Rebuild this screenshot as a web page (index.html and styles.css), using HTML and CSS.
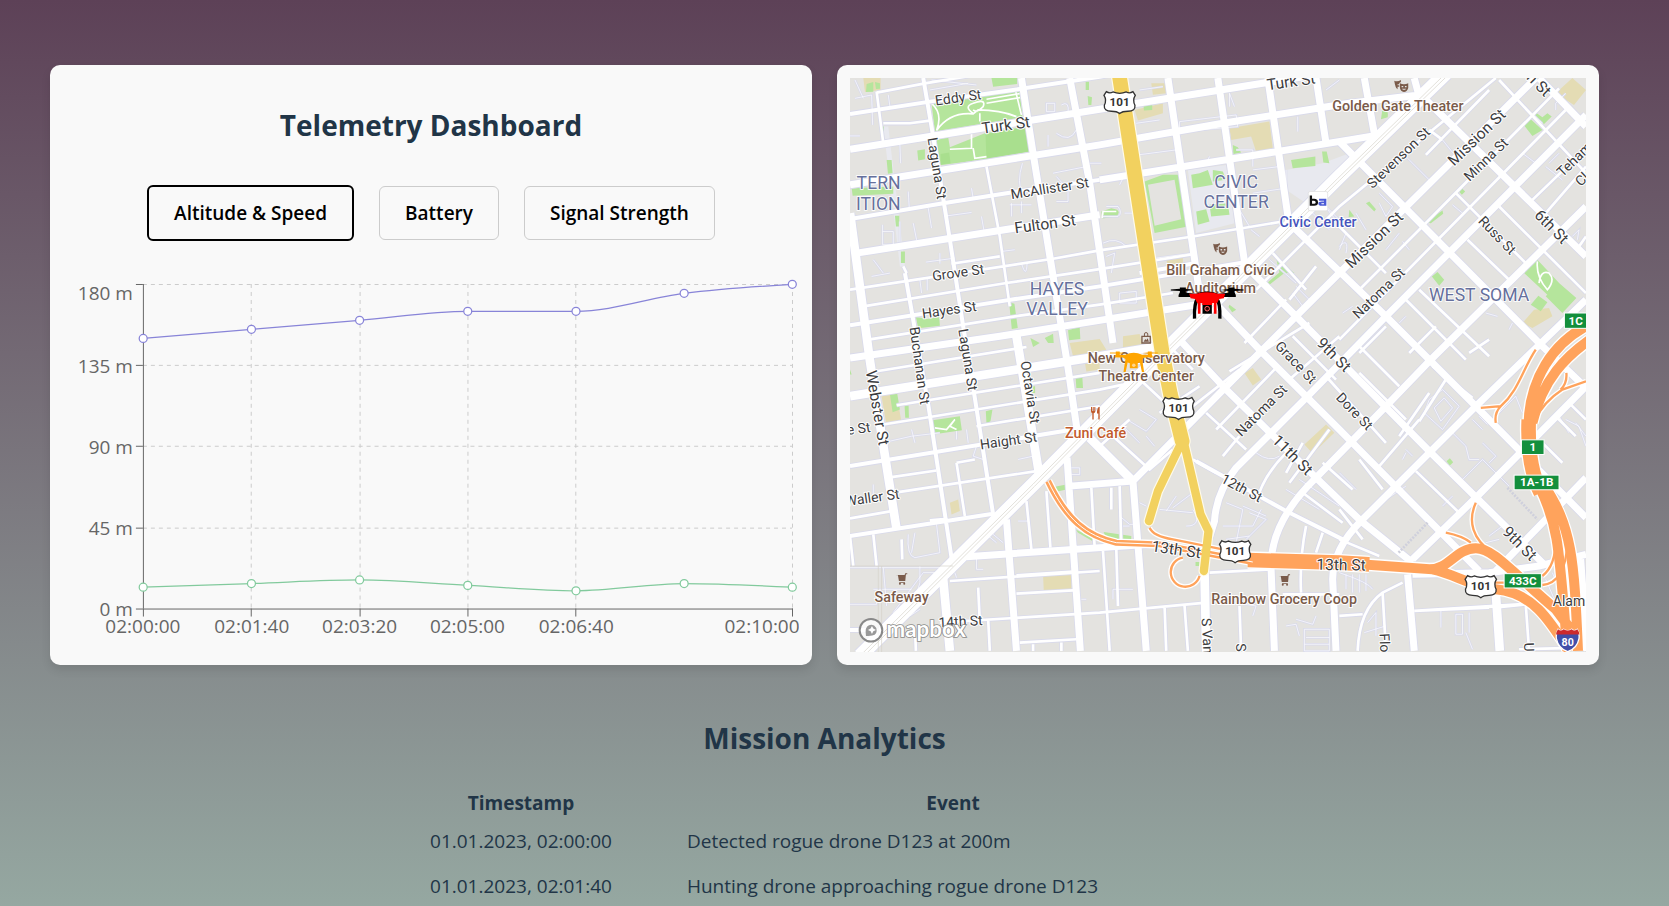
FILE: index.html
```html
<!DOCTYPE html>
<html lang="en">
<head>
<meta charset="utf-8">
<title>Telemetry Dashboard</title>
<link rel="stylesheet" href="styles.css">
</head>
<body>
<main class="page">
<div class="panels">
<section class="card">
<h2 class="title">Telemetry Dashboard</h2>
<div class="tabs">
<button class="tab active" type="button">Altitude &amp; Speed</button>
<button class="tab" type="button">Battery</button>
<button class="tab" type="button">Signal Strength</button>
</div>
<svg class="chart" viewBox="63 278 737 375" role="img" aria-label="Altitude and speed over time">
<path class="grid" d="M143 284.5H793M143 365.5H793M143 446.5H793M143 528.5H793M251.5 284V609M360.5 284V609M468.5 284V609M576.5 284V609M793.5 284V609"/>
<path class="axis" d="M143.5 284V609M143 609.5H794M136 284.5H143M136 365.5H143M136 446.5H143M136 528.5H143M136 609.5H143M143.5 609V617M251.5 609V617M360.5 609V617M468.5 609V617M576.5 609V617M793.5 609V617"/>
<g class="tick end"><text x="133" y="300">180 m</text><text x="133" y="373">135 m</text><text x="133" y="454">90 m</text><text x="133" y="535">45 m</text><text x="133" y="616">0 m</text></g>
<g class="tick mid"><text x="143" y="633">02:00:00</text><text x="252" y="633">02:01:40</text><text x="360" y="633">02:03:20</text><text x="468" y="633">02:05:00</text><text x="577" y="633">02:06:40</text><text x="763" y="633">02:10:00</text></g>
<g class="altitude"><path d="M143.3 338.5L251.7 329.4L360 320.4C396 317.4 432 311.4 468.3 311.4L576.7 311.4C612.8 311.4 648.9 297.8 685 293.3C721 288.8 757 286.5 793.3 284.3"/>
<circle cx="143.3" cy="338.5" r="4"/><circle cx="251.7" cy="329.4" r="4"/><circle cx="360" cy="320.4" r="4"/><circle cx="468.3" cy="311.4" r="4"/><circle cx="576.7" cy="311.4" r="4"/><circle cx="685" cy="293.3" r="4"/><circle cx="793.3" cy="284.3" r="4"/></g>
<g class="speed"><path d="M143.3 587.6L251.7 584C288 582.8 324 580.4 360 580.4C396 580.4 432 584 468.3 585.8C504.4 587.6 540.6 591.2 576.7 591.2C612.8 591.2 649 584 685 584C721 584 757 585.8 793.3 587.6"/>
<circle cx="143.3" cy="587.6" r="4"/><circle cx="251.7" cy="584" r="4"/><circle cx="360" cy="580.4" r="4"/><circle cx="468.3" cy="585.8" r="4"/><circle cx="576.7" cy="591.2" r="4"/><circle cx="685" cy="584" r="4"/><circle cx="793.3" cy="587.6" r="4"/></g>
</svg>
</section>
<section class="card">
<svg class="map" viewBox="30 54 2211 1725" role="img" aria-label="Drone positions on a street map">
<defs>
<g id="roads">
<g class="alley"><path d="M45 60L70 115M45 115L95 105L98 195M30 228H60M145 105L150 140M180 255L182 310M205 395L208 445M265 445L275 505M322 468L395 458M395 385L400 415M425 470L432 510M128 495V555H160V515H128M180 485V545M220 490L230 540M258 607L345 595M300 580V612M100 600L130 640M95 650L150 640M240 660L245 700M262 655V692M485 575L525 570M545 610Q560 660 562 610M510 435H575M515 430V470M545 425V460M620 130H645V155H620ZM665 135Q690 120 685 160M625 225V260M650 220Q690 250 710 210M640 340L750 318M650 350L690 395M650 425H685V390M548 310Q530 370 548 400M275 60L410 75M270 90L385 70"/>
<path d="M150 1145L215 1130L300 1120M215 1110L225 1150M205 1425Q200 1490 225 1495L300 1480L290 1395M225 1420L215 1480M380 1110L385 1150M350 1115V1140M410 1160L400 1190L430 1200M535 1200L580 1190M100 1275V1310M535 1385H565M30 1525H330M130 1525L140 1640M240 1520V1570L225 1620M160 1660L250 1540H285L170 1680M410 1490V1530H430M30 1635H110V1600M345 1540L350 1555M440 1425L470 1450M460 1425L490 1450M725 1620H740M695 1225H720V1245H695M100 1590H215M210 1670L240 1650"/>
<path d="M1170 100L1185 140M1170 100V140M1020 185L1190 165L1195 200L1020 215ZM900 90L970 80M890 190L960 180M895 285L1010 270M840 375L850 355M1240 330L1320 320M1240 400L1340 385M1375 170V215M1190 270H1240V320M800 440H835Q850 460 835 470H790M855 460H885M790 550Q830 530 860 560M800 590L825 580L815 640M1200 450L1230 500M1235 510L1260 530M840 700L890 695V730H840ZM950 595L1060 580M1290 600L1370 670M1370 680L1410 720L1390 740L1360 700M1400 440L1470 510M1430 410L1500 480M1450 430L1520 520L1500 570M1460 90L1500 60M1340 330V380M750 310H785M1110 290L1105 300"/>
<path d="M1700 290L1770 360M1810 240L1850 290M1500 560Q1530 530 1520 580M1620 400L1660 440L1640 470L1620 430M1550 460L1580 510M1840 435L1870 460M1690 545L1710 570M1640 570L1680 520M2030 115L2110 190M2050 280L2090 310M2120 320L2170 360M2130 310L2160 280M2020 790L2010 810M1940 760L1975 770M2150 150V130L2180 100M2200 530L2220 510L2215 540M1540 740L1510 760M1680 790L1700 770"/>
<path d="M850 1100L900 1150M870 1085L920 1115L950 1080L900 1050M920 1130L945 1160M900 1330L920 1340M960 1350L1060 1360M1000 1345L1060 1300M1010 1310L980 1355M1060 1350Q1090 1400 1040 1400M840 1370L870 1395H880M850 1400H870M1160 1330L1210 1350L1190 1450M1210 1340L1280 1370M1150 1400H1240L1265 1350M1160 1440L1230 1430M1230 1360L1280 1380L1220 1440M1250 1180Q1290 1210 1320 1190M1340 1290L1440 1350M1380 1260L1500 1340M1500 1240L1550 1290M820 1620V1590H880M1180 1630L1250 1640L1240 1670M1395 1710H1470V1775H1395ZM1400 1735H1470M1395 1755H1470M1370 1680L1420 1695L1430 1670M1340 1700L1370 1695L1380 1730"/>
<path d="M1770 1020L1810 990L1860 1040L1810 1110L1755 1060ZM1785 1045L1815 1015L1840 1045L1805 1085ZM1840 1120L1880 1160L1890 1200H1920M1930 1150L1970 1190L1950 1210M1870 1260L1930 1200L2010 1280M1900 1080L1930 1110M1920 1070L1945 1095M2210 1090L2241 1130M2180 1080L2220 1100L2241 1160M2160 1070L2190 1120M1600 1590Q1590 1570 1500 1540M1520 1545V1590M1540 1545V1600M1560 1545V1600M1580 1545V1595M1850 1665H1870V1725H1850ZM1890 1660V1720M1805 1655V1705M1880 1720L1900 1770M1585 1690L1610 1660V1730M1575 1720L1640 1700M2060 1630V1660M1950 1430L1990 1400M1940 1450L1980 1440M2060 1480L2110 1500M2120 1560L2150 1630M2140 1540L2180 1640M1980 1060L2030 1010L2050 1060M2010 940L2050 900M1500 1520L1600 1530M1700 1170L1720 1190M1700 1180L1690 1200M1640 1320L1700 1280M1840 1310L1810 1340"/></g>
<g class="lane"><path d="M110 98L255 70L560 20M110 95L130 250M130 190L210 190L270 182M190 620L200 640M480 590L335 612M30 690L640 597L780 572L1060 530L1330 485M70 740L500 670L780 628L1070 582M85 840L540 768L780 735L1000 700M110 935L560 862M170 1037L780 940M130 1095L780 990L850 975M410 1100L780 1040M155 1253L290 1233M175 1298L590 1235M30 1377L155 1355M330 1565L780 1535M530 1603L700 1593M530 1548L700 1537M300 1690L780 1660L1100 1630M540 1750L710 1740M440 320L480 530L510 740M560 1325L575 1470M620 1295L632 1465M755 1285L765 1465M790 1475L810 1775M830 1470L835 1640M975 1640L980 1775M1035 1640L1045 1775M1200 1640L1205 1775M445 1680L450 1775M415 1585L420 1690M580 1755V1775M665 1750V1775M225 1700L228 1775M100 1425L110 1520M30 1430L40 1520M350 1210L375 1370M350 1210L405 1200M185 1440L187 1500M840 1280L845 1460M815 1285V1350"/>
<path d="M1970 54L1500 440L1250 690M2160 85L1740 510L1560 690M2180 150L1500 840M2241 265L2080 420M2241 320L2120 460M1950 90L1760 285M2241 530L2220 560M1980 60L2241 340M1810 240L1770 210M1850 400L2060 610M1980 440L2241 700M1885 540L2020 670M1740 690L1950 890M1500 500L1640 640M1300 580L1400 690M1430 620L1350 720M1340 720L1215 850M1410 790L1170 935M1700 720L1880 900M1790 800L1710 880M1950 840L1890 880M1360 830L1490 960M1200 930L1060 1040M1310 925L1130 1110M1350 960L1500 830M1100 1060L1220 1170M1200 1130L1150 1190M1340 1180Q1270 1250 1250 1330M1500 1110L1620 1230M1560 940L1700 1080M1640 800L1560 880M1460 950L1640 1150M1740 1080L1620 1220M1730 1235L1860 1360M1680 1130L1770 1000M1560 1200L1630 1290M1450 1210L1540 1290M1390 1150L1340 1240M1470 1110L1350 1270M1390 1300L1510 1390M1400 1400Q1380 1500 1385 1600M1450 1420L1430 1480M1500 1440L1620 1490M1110 1540L1295 1530M1330 1605L1500 1605M1500 1670L1570 1665M1725 1655L1950 1645M1725 1655L2120 1630M1965 1645L2120 1630M2060 1635L2070 1775M2040 1770L2241 1765M1740 1085L1820 960M1900 1015L1780 920M1680 980L1560 860M2110 1150L2170 1210M2150 1070L2210 1130M2241 1080L2190 1030M1130 1240L1060 1200M880 940L1030 1080M960 1060L1080 980M820 1130L930 1230L1000 1170M780 1160L870 1080M1500 1350L1570 1440M1000 870L1060 930"/>
<path d="M1690 1570L1630 1600Q1560 1650 1555 1775M1630 1600L1640 1775"/></g>
<g class="street"><path d="M30 162L270 125L520 90L780 50L990 15M30 478L310 430L500 400L780 360M30 797L500 722L780 680L1230 605M30 1220L700 1110M30 1430L460 1363M195 640L265 1035L335 1495M250 54L280 230L330 540L370 800L405 1015L460 1365M1070 1205L1340 1355L1510 1440M270 1385L320 1380M30 1712H80M900 640L1070 610M1500 1110L1400 1015"/></g>
<g class="avenue"><path d="M30 268L780 148L1270 70L1700 0M30 375L780 255L1150 190L1530 130L1740 105M780 360L1170 298L1530 240L1620 225M50 580L480 512L780 465M30 895L480 830L780 782L1070 735M380 1492L930 1455M690 1280L880 1265M545 54L580 280L685 925L712 1110M682 1195L722 1775M690 54L750 370L820 850M985 54L1080 700M1135 54L1220 640M1285 54L1350 500M1430 54L1460 250M1575 54L1605 220M1725 54L1740 110M1720 1545L1950 1540L2100 1520L2241 1485M1705 1545L1725 1775M2225 1500L2245 1775"/>
<path d="M2090 54L1500 640L1250 890L880 1265M2241 165L1640 770L1400 1015L1190 1225Q1130 1300 1125 1385L1095 1480M2241 440L1770 905L1640 1040L1430 1255Q1290 1390 1295 1530L1305 1775M2241 720L1910 1040L1565 1385Q1480 1470 1480 1560L1490 1775M2241 980L1910 1315L1720 1500M2241 1255L1970 1535M1740 100L2241 590M2100 54L2241 200M1500 245L2100 850L2241 985M1350 490L1640 770L1910 1040L2241 1375M1210 610L1370 770L1775 1180L2120 1520M1080 680L1270 880L1500 1110L1920 1535M1020 840L1160 990L1430 1255L1565 1385L1720 1510M880 1265L920 1775M500 1380L530 1775"/></g>
<g class="boulevard"><path d="M30 460L90 905L170 1410M30 1010L780 890L960 860M530 830L600 1255M310 1560L330 1775M750 1135L880 1265M1095 1540L1100 1775M1970 1600L1982 1775"/></g>
<g class="market"><path d="M60 1790L585 1270L990 860L1500 350L1820 40"/></g>
</g>
<g id="freeway">
<g class="f30"><path d="M1240 1505L1500 1510L1780 1530C1850 1545 1880 1575 1970 1590C2080 1600 2130 1680 2190 1775M1770 1530C1830 1530 1850 1467 1910 1467C1960 1467 2010 1530 2150 1650L2210 1730M2250 795C2140 850 2070 960 2068 1100M2260 835C2180 890 2110 960 2080 1090M2100 1280C2160 1400 2160 1470 2185 1775M2110 1270C2200 1400 2205 1500 2217 1775"/></g>
<g class="f40"><path d="M2069 1080C2065 1180 2080 1250 2105 1300M1225 1502L1500 1510L1590 1515"/></g>
<g class="f20"><path d="M625 1265C680 1380 740 1430 830 1450L960 1455L1240 1508"/></g>
<g class="f8"><path d="M930 1405Q940 1430 1000 1440L1150 1470L1260 1490M1030 1495A44 44 0 1 0 1080 1550M1925 1045L1985 1040C2040 990 2050 930 2090 870M1985 1040Q1965 1060 1970 1090M2241 965L2170 990Q2110 1030 2090 1080M2182 940Q2185 970 2165 990M1910 1330C1885 1385 1900 1440 1960 1480M1820 1420Q1870 1430 1895 1450M2150 1440Q2150 1520 2110 1550M2185 1450Q2180 1570 2110 1577M1960 1570H2010"/></g>
</g>
<g id="us101"><path class="shield" d="M-40-33Q-30-26-20-32Q0-24 20-32Q30-26 40-33L47-22Q38-8 46 8Q48 26 25 26Q8 26 0 33Q-8 26-25 26Q-48 26-46 8Q-38-8-47-22Z"/><text class="route dark" y="11">101</text></g>
<g id="cart"><path d="M0 8H7L10 25H29L31 5H35V2H29L27 7H8ZM11 28H28V30H11Z"/><circle cx="13" cy="33" r="3"/><circle cx="26" cy="33" r="3"/></g>
<g id="masks"><path d="M0 2Q10 6 20 0L20 6L15 9V13H10V16H15V20H10V28Q3 24 0 2Z"/><path fill-rule="evenodd" d="M17 10Q29 16 42 10V24Q38 36 29 36Q19 34 17 24ZM22 18V22H27V18ZM32 18V22H37V18ZM23 26Q29 33 36 26Z"/></g>
</defs>
<rect class="land" x="30" y="54" width="2211" height="1725"/>
<path class="civic" d="M1045 330L1160 315L1185 490L1070 520ZM1340 330L1450 310L1530 280L1520 330L1400 430L1340 390ZM130 200L145 200L195 620L180 620Z"/>
<path class="sand" d="M70 54H122V90L75 96ZM935 70H980V100L940 104ZM885 150L970 130V160L895 182ZM1170 205L1290 185L1300 265L1250 275L1235 230L1175 240ZM690 850L780 838L800 870L700 890ZM850 830L900 823L910 860L850 865ZM980 600L1030 592L1030 610L985 615ZM2150 100L2200 54L2241 90L2205 135ZM2050 790L2085 750L2130 745L2140 770L2080 805ZM125 1010L170 1003L185 1090L140 1100ZM330 1330L355 1320L360 1355L335 1365ZM610 1548L695 1543V1590L612 1593ZM1215 940L1240 925L1265 960L1240 978ZM1395 1155L1460 1095L1485 1120L1420 1182ZM735 905L780 900V930L740 936Z"/>
<path class="park" d="M455 54H532V72L460 80ZM80 72L100 66V95L78 96ZM105 66L120 70V86L108 87ZM275 130L540 92L548 172L285 215ZM290 240L325 232L330 262L435 220L555 200L568 275L440 297L300 316ZM232 272L255 268V298L235 302ZM35 385L160 380V402L38 408ZM122 200H132V238H124ZM140 300L155 300L158 340L144 342ZM165 468H178V500H168ZM183 575H195V610H183ZM738 65H748V90H738ZM744 108L757 112L755 135H746ZM228 772L262 778L298 772L300 798L235 806ZM508 728L524 732L534 805L516 808ZM572 835L600 850L580 862ZM615 835L640 822L642 850L625 850ZM685 812L720 802L722 838L688 842ZM30 930L35 945H30ZM150 1005L172 1003L180 1050L158 1058ZM194 1040L206 1038L207 1075H196ZM278 1082L360 1070L366 1112L284 1124ZM438 1055L458 1050L452 1085L440 1092ZM708 955L728 953L730 985H710ZM645 1282L680 1275V1290L650 1297ZM708 1410L760 1435L758 1445L715 1420ZM792 1418L875 1430V1440H800ZM578 980H586V1000H578ZM1068 1508H1080V1520H1068ZM912 138L938 134V150L913 152ZM1180 255L1195 262L1205 278L1182 282ZM915 365L970 345L1018 345L1045 500L945 520ZM1055 345L1080 340L1105 330L1120 375L1060 385ZM1120 330L1150 335L1160 360L1120 365ZM1070 455L1100 448L1110 485L1075 495ZM1110 435L1165 430L1170 465L1115 470ZM785 455L815 445Q850 450 830 470L788 476ZM1355 300L1428 290V318L1360 325ZM1448 275H1462L1470 310L1452 308ZM1310 595L1365 640L1335 640L1290 675L1285 668L1320 638ZM1170 735L1190 750L1178 758L1167 742ZM1630 145Q1650 150 1645 172L1625 178ZM2050 190L2075 178L2110 210L2080 228ZM2080 165L2090 158L2110 172L2125 160L2138 170L2115 192ZM1580 430L1590 425L1610 448L1605 455ZM1530 450L1545 470L1528 472ZM1855 390L1865 382L1878 395L1868 405ZM1762 488L1775 475L1810 452L1812 462L1775 490ZM1778 650L1795 637L1815 660L1800 678ZM2055 640L2095 600L2165 675L2125 705ZM2120 710L2160 670L2212 715L2170 760ZM2075 735L2098 708L2125 728L2105 755ZM1822 1205L1832 1196L1842 1208L1832 1218Z"/>
<path class="park-dark" d="M437 222L557 203L568 275L440 297ZM302 282L328 278L332 310L303 314Z"/>
<path class="lawn" d="M925 375L1005 360L1025 478L945 498Z"/>
<path class="trail" d="M275 130Q310 160 290 212M290 212Q330 155 400 162L415 150Q480 150 530 170M400 160Q370 140 400 130Q440 115 430 140Q410 160 400 150M420 160V185M440 118L545 100M440 130L545 112M528 95L545 165M395 220V265L330 268M400 265L405 295L440 290M2095 605Q2090 650 2125 690Q2150 660 2130 640Q2105 630 2100 670M285 1105L320 1110L345 1080L330 1100L350 1110M788 475L790 455H830"/>
<g class="casing"><use href="#roads"/></g>
<g class="fill"><use href="#roads"/></g>
<path class="rails" d="M72 1790L585 1280L990 870L1500 362L1832 40M66 1784L580 1274L985 864L1495 356L1826 34M30 1520H340M115 1520V1779M125 1520V1779"/>
<path class="steps" d="M1678 1480L1765 1390M2005 1285L2095 1380"/>
<g class="highway-casing"><path class="f40" d="M838 40L968 880L993 1005L1028 1145"/><path class="f26" d="M1028 1145L955 1295L928 1385M1032 1145L1083 1365L1107 1415L1093 1535"/></g>
<g class="freeway-casing"><use href="#freeway"/></g>
<g class="freeway"><use href="#freeway"/></g>
<path class="stripe" d="M625 1265C680 1380 740 1430 830 1450L960 1455L1240 1508"/>
<g class="highway"><path class="f40" d="M838 40L968 880L993 1005L1028 1145"/><path class="f26" d="M1028 1145L955 1295L928 1385M1032 1145L1083 1365L1107 1415L1093 1535"/></g>
<g class="street-label">
<text x="355" y="112" transform="rotate(-8 355 112)">Eddy St</text>
<text class="big" x="498" y="195" transform="rotate(-8 498 195)">Turk St</text>
<text class="big" x="1355" y="64" transform="rotate(-8 1355 64)">Turk St</text>
<text x="292" y="325" transform="rotate(81 292 325)">Laguna St</text>
<text x="630" y="385" transform="rotate(-9 630 385)">McAllister St</text>
<text class="big" x="616" y="492" transform="rotate(-8 616 492)">Fulton St</text>
<text x="355" y="638" transform="rotate(-8 355 638)">Grove St</text>
<text x="328" y="750" transform="rotate(-8 328 750)">Hayes St</text>
<text x="240" y="918" transform="rotate(82 240 918)">Buchanan St</text>
<text x="385" y="900" transform="rotate(81 385 900)">Laguna St</text>
<text class="big" x="113" y="1045" transform="rotate(80 113 1045)">Webster St</text>
<text x="572" y="998" transform="rotate(81 572 998)">Octavia St</text>
<text x="56" y="1107" transform="rotate(-8 56 1107)">e St</text>
<text x="506" y="1143" transform="rotate(-8 506 1143)">Haight St</text>
<text x="96" y="1314" transform="rotate(-8 96 1314)">Waller St</text>
<text x="362" y="1686" transform="rotate(-3 362 1686)">14th St</text>
<text x="1677" y="293" transform="rotate(-44 1677 293)">Stevenson St</text>
<text class="big" x="1912" y="232" transform="rotate(-44 1912 232)">Mission St</text>
<text x="1940" y="298" transform="rotate(-44 1940 298)">Minna St</text>
<text class="big" x="2100" y="72" transform="rotate(45 2100 72)">h St</text>
<text x="2214" y="290" transform="rotate(-44 2214 290)">Tehama</text>
<text x="2236" y="350" transform="rotate(-44 2236 350)">Cle</text>
<text class="big" x="1604" y="540" transform="rotate(-44 1604 540)">Mission St</text>
<text x="1618" y="700" transform="rotate(-44 1618 700)">Natoma St</text>
<text x="1975" y="526" transform="rotate(46 1975 526)">Russ St</text>
<text class="big" x="2138" y="500" transform="rotate(45 2138 500)">6th St</text>
<text x="1370" y="908" transform="rotate(46 1370 908)">Grace St</text>
<text class="big" x="1484" y="885" transform="rotate(45 1484 885)">9th St</text>
<text x="1546" y="1055" transform="rotate(46 1546 1055)">Dore St</text>
<text x="1265" y="1052" transform="rotate(-45 1265 1052)">Natoma St</text>
<text class="big" x="1360" y="1186" transform="rotate(45 1360 1186)">11th St</text>
<text x="1207" y="1285" transform="rotate(28 1207 1285)">12th St</text>
<text class="big" x="1010" y="1470" transform="rotate(8 1010 1470)">13th St</text>
<text class="big" x="1505" y="1516" transform="rotate(1 1505 1516)">13th St</text>
<text class="big" x="2042" y="1452" transform="rotate(45 2042 1452)">9th St</text>
<text x="2190" y="1624">Alam</text>
<text x="1105" y="1750" transform="rotate(87 1105 1750)">S Van N</text>
<text x="1205" y="1765" transform="rotate(88 1205 1765)">S</text>
<text x="1637" y="1758" transform="rotate(88 1637 1758)">Flor</text>
<text x="2070" y="1764" transform="rotate(88 2070 1764)">U</text>
</g>
<g class="area-label">
<text class="to-edge" x="182" y="388">TERN</text><text class="to-edge" x="182" y="450">ITION</text>
<text x="652" y="706">HAYES</text><text x="652" y="767">VALLEY</text>
<text x="1190" y="385">CIVIC</text><text x="1190" y="446">CENTER</text>
<text x="1920" y="723">WEST SOMA</text>
</g>
<g class="place">
<text x="1676" y="152">Golden Gate Theater</text>
<text x="1143" y="645">Bill Graham Civic</text><text x="1143" y="699">Auditorium</text>
<text x="920" y="911">New Conservatory</text><text x="920" y="964">Theatre Center</text>
<text x="185" y="1629">Safeway</text>
<text x="1334" y="1633">Rainbow Grocery Coop</text>
<text class="food" x="768" y="1134">Zuni Café</text>
<text class="transit" x="1436" y="503">Civic Center</text>
<use href="#masks" x="1665" y="60"/><use href="#masks" x="1121" y="550"/>
<use href="#cart" x="167" y="1540"/><use href="#cart" x="1317" y="1543"/>
<path class="food" d="M754 1042V1055Q754 1060 758 1061V1080H762V1061Q767 1060 767 1055V1042H764V1054H762V1042H759V1054H757V1042ZM777 1042Q771 1048 772 1062H776V1080H780V1042Z"/>
<path fill-rule="evenodd" d="M905 828H913V822Q919 812 926 822V828H934V852H905ZM916 828H923V823Q919 817 916 823ZM909 832V848H930V832ZM912 846L917 838L920 842L924 836L928 846Z"/>
</g>
<rect class="station" x="1407" y="395" width="58" height="58" rx="5"/>
<path class="bart-b" d="M1411 407V438H1424Q1436 438 1436 428Q1436 417 1424 417H1418V407ZM1418 423H1424Q1429 424 1429 428Q1429 432 1424 432H1418Z"/>
<path class="bart-a" d="M1439 417H1461V438H1447Q1437 438 1437 431Q1437 425 1447 425H1454V423H1439ZM1447 430H1454V433H1447Q1444 432 1447 430Z"/>
<use href="#us101" x="840" y="128"/><use href="#us101" x="1017" y="1047"/><use href="#us101" x="1187" y="1477"/><use href="#us101" x="1925" y="1582"/>
<g class="exit"><rect x="2176" y="760" width="80" height="46"/><rect x="2047" y="1141" width="68" height="44"/><rect x="2025" y="1247" width="135" height="44"/><rect x="1995" y="1543" width="112" height="43"/></g>
<text class="route" x="2210" y="795">1C</text><text class="route" x="2081" y="1175">1</text><text class="route" x="2093" y="1281">1A-1B</text><text class="route" x="2051" y="1576">433C</text>
<path class="i80" d="M2157 1710Q2150 1723 2152 1738Q2158 1768 2186 1777Q2214 1768 2220 1738Q2222 1723 2215 1710Q2205 1718 2198 1710Q2186 1718 2174 1710Q2165 1718 2157 1710Z"/>
<path class="i80-top" d="M2157 1710Q2151 1718 2151 1726H2221Q2221 1718 2215 1710Q2205 1718 2198 1710Q2186 1718 2174 1710Q2165 1718 2157 1710Z"/>
<text class="route small" x="2186" y="1759">80</text>
<g class="logo"><circle class="ring" cx="93" cy="1713" r="34"/><path class="drop" d="M78 1730Q74 1702 87 1698Q101 1693 109 1706Q114 1725 97 1729Q88 1731 78 1730Z"/><path class="star" d="M96 1700L100 1708L108 1712L100 1716L96 1724L92 1716L84 1712L92 1708Z"/><text x="140" y="1732">mapbox</text></g>
<svg class="drone orange" x="810" y="873" width="145" height="66" viewBox="0 0 220 100">
<path d="M0 9H28V4H46V9L70 11L46 14V19H72Q110 0 148 19H174V14L150 11L174 9V4H192V9H220V13H192V18L196 26V31H160L148 38L157 97H147L138 54L128 58V80H92V58L82 54L73 97H63L72 38L60 31H24V26L28 18V13H0Z"/><circle class="lens" cx="110" cy="67" r="8"/></svg>
<svg class="drone" x="993" y="680" width="220" height="100" viewBox="0 0 220 100">
<path d="M0 9L28 7V3H46V8L70 11L46 14V19L76 22Q110 8 144 22L174 19V14L150 11L174 8V3H192V7L220 9V12L192 14V18L196 26V32H24V26L28 18V14L0 12Z"/>
<path class="leg" d="M82 36Q70 50 72 97M138 36Q150 50 148 97"/><path class="red" d="M56 22H78Q110 14 142 22H164L160 36L146 38L140 50H80L74 38L60 36Z"/><path class="red-leg" d="M86 46V82M134 46V82"/><path d="M96 54H124V82H96Z"/><path class="red" d="M95 48H125V56H95Z"/><circle class="ring-red" cx="110" cy="67" r="7"/></svg>
</svg>
</section>
</div>
<section class="analytics">
<h2 class="title">Mission Analytics</h2>
<table class="events">
<thead><tr><th>Timestamp</th><th class="wide">Event</th></tr></thead>
<tbody>
<tr><td>01.01.2023, 02:00:00</td><td>Detected rogue drone D123 at 200m</td></tr>
<tr><td>01.01.2023, 02:01:40</td><td>Hunting drone approaching rogue drone D123</td></tr>
</tbody>
</table>
</section>
</main>
</body>
</html>
```
FILE: styles.css
```css
* { box-sizing: border-box; }
html { background: #a8caba; }
body {
  margin: 0;
  min-height: 1208px;
  background: linear-gradient(to bottom, #5d4157, #a8caba);
  color: #213547;
  font-family: "Open Sans", "Noto Sans", sans-serif;
  font-size: 19px;
}
.page { padding: 65px 70px 0 50px; }
.panels { display: grid; grid-template-columns: 1fr 1fr; gap: 25px; }
.card {
  min-width: 0;
  padding: 13px;
  border-radius: 10px;
  background: #f9f9f9;
  box-shadow: 0 5px 10px rgba(0, 0, 0, .1);
}
.title { margin: 0; font-size: 28px; line-height: 42px; font-weight: 700; text-align: center; }
.card .title { margin: 26px 0 39px; }
.tabs { display: flex; justify-content: center; align-items: center; gap: 25px; height: 56px; margin-bottom: 37px; }
.tab {
  height: 54px;
  padding: 0 25px;
  border: 1px solid #ccc;
  border-radius: 6px;
  background: #f9f9f9;
  color: #000;
  font: 600 19px "Open Sans", "Noto Sans", sans-serif;
}
.tab.active { height: 56px; border: 2px solid #000; }
.chart, .map { display: block; width: 100%; height: auto; }
.grid { fill: none; stroke: #ccc; stroke-dasharray: 4 4; }
.axis { fill: none; stroke: #666; }
.tick { fill: #666; font-size: 19px; }
.end { text-anchor: end; }
.mid { text-anchor: middle; }
.altitude { fill: none; stroke: #8884d8; stroke-width: 1.25; }
.speed { fill: none; stroke: #82ca9d; stroke-width: 1.25; }
.altitude circle, .speed circle { fill: #fff; }

.map { font-family: Roboto, "Open Sans", sans-serif; overflow: hidden; }
.land { fill: #e4e3e0; }
.civic { fill: #e8e9ef; }
.sand { fill: #e4dcb4; }
.park { fill: #b5e59c; }
.park-dark { fill: #a9df8e; }
.lawn { fill: #e4e3e0; }
.trail { fill: none; stroke: #fff; stroke-width: 5; }
.casing { stroke: #d9daeb; --edge: 5px; }
.fill { stroke: #fff; --edge: 0px; }
.alley, .lane, .street, .avenue, .boulevard, .market { fill: none; }
.alley { stroke-width: calc(2px + var(--edge)); }
.lane { stroke-width: calc(8px + var(--edge)); }
.street { stroke-width: calc(12px + var(--edge)); }
.avenue { stroke-width: calc(21px + var(--edge)); }
.boulevard { stroke-width: calc(26px + var(--edge)); }
.market { stroke-width: calc(42px + var(--edge)); }
.rails { fill: none; stroke: #d4d2c8; stroke-width: 2; }
.steps { fill: none; stroke: #cfd0dc; stroke-width: 8; stroke-dasharray: 6 4; }
.highway, .highway-casing { fill: none; stroke-linecap: round; stroke-linejoin: round; }
.highway { stroke: #f2d15f; --edge: 0px; }
.highway-casing { stroke: #fffbe9; --edge: 7px; }
.freeway, .freeway-casing { fill: none; }
.freeway { stroke: #ffa35c; --edge: 0px; }
.freeway-casing { stroke: #fff; --edge: 8px; }
.f8 { stroke-width: calc(7px + var(--edge)); }
.f20 { stroke-width: calc(18px + var(--edge)); }
.f26 { stroke-width: calc(25px + var(--edge)); }
.f30 { stroke-width: calc(30px + var(--edge)); }
.f40 { stroke-width: calc(44px + var(--edge)); }
.stripe { fill: none; stroke: #fff; stroke-width: 3; }
.street-label { fill: #3c3c3e; font-size: 42px; text-anchor: middle; dominant-baseline: central; stroke: #fff; stroke-width: 6; stroke-linejoin: round; paint-order: stroke; }
.street-label .big { font-size: 47px; }
.area-label { fill: #66709c; font-size: 53px; text-anchor: middle; stroke: #fff; stroke-width: 5; paint-order: stroke; }
.area-label .to-edge { text-anchor: end; }
.place { fill: #7a5b4a; }
.place text { font-size: 43px; font-weight: 500; text-anchor: middle; stroke: #fff; stroke-width: 6; paint-order: stroke; }
.place .food { fill: #c25a2b; }
.place .transit { fill: #4655bd; }
.station { fill: #fff; stroke: #ddd; stroke-width: 2; }
.bart-b { fill: #111; fill-rule: evenodd; }
.bart-a { fill: #4b5bd6; fill-rule: evenodd; }
.shield { fill: #fff; stroke: #333; stroke-width: 4; }
.route { fill: #fff; font-size: 35px; font-weight: 700; text-anchor: middle; }
.small { font-size: 32px; }
.dark { fill: #333; }
.exit { fill: #138f3c; stroke: #fff; stroke-width: 3; }
.i80 { fill: #414fa8; stroke: #fff; stroke-width: 4; }
.i80-top { fill: #cc2a2c; }
.logo text { fill: #fff; font-family: Lato, sans-serif; font-size: 67px; font-weight: 700; stroke: #8a8a88; stroke-width: 5; paint-order: stroke; }
.ring { fill: #fff; fill-opacity: .8; stroke: #888; stroke-width: 6; }
.drop { fill: #999; }
.star { fill: #fff; }
.drone { fill: #000; }
.orange { fill: #ffa500; }
.lens { fill: #ffd58a; }
.leg { fill: none; stroke: #000; stroke-width: 10; }
.red { fill: #f00; }
.red-leg { fill: none; stroke: #f00; stroke-width: 8; }
.ring-red { fill: #300; stroke: #f66; stroke-width: 3; }

.analytics { padding-top: 52px; }
.events { margin: 25px auto 0; border-spacing: 3px; }
.events th { padding: 0 36px; line-height: 32px; font-weight: 700; }
.events td { padding: 6px 36px; line-height: 30px; }
.events tbody tr:first-child td { padding-top: 4px; }
.wide { min-width: 604px; }
```
